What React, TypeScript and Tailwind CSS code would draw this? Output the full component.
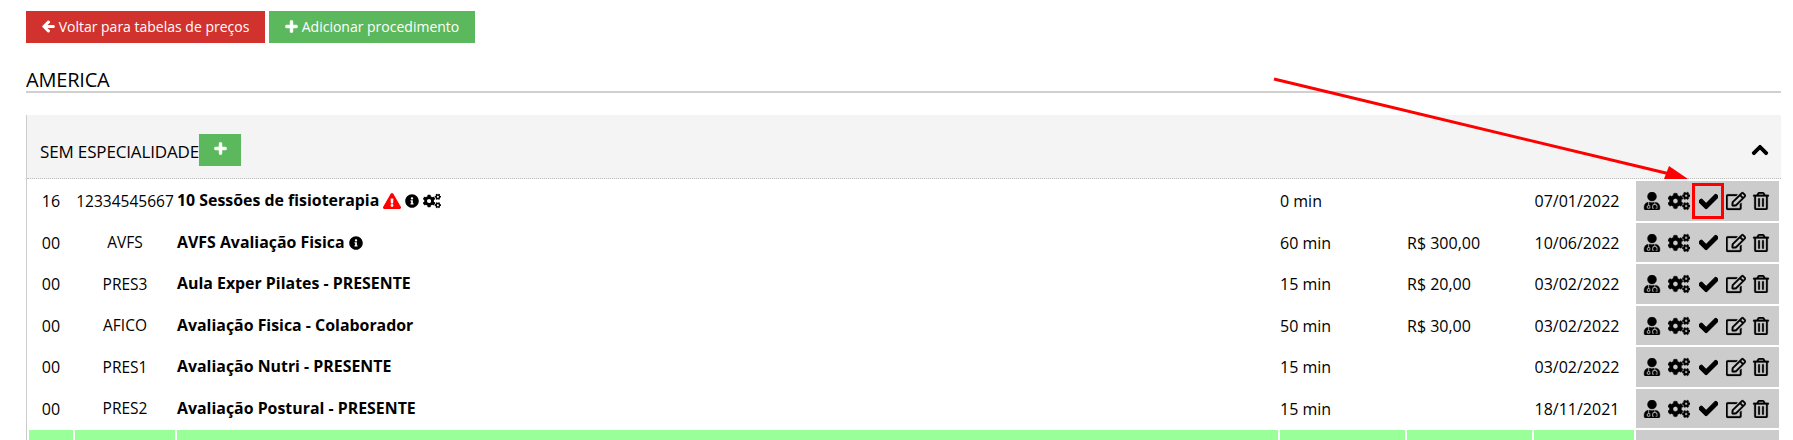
import { FaArrowLeft, FaCheck, FaChevronUp, FaCogs, FaExclamationTriangle, FaInfoCircle, FaPlus, FaRegEdit, FaRegTrashAlt, FaUserMd } from "react-icons/fa";

const rows = [
  { qty: "16", code: "12334545667", name: "10 Sessões de fisioterapia", warn: true, info: true, gears: true, time: "0 min", price: "", date: "07/01/2022" },
  { qty: "00", code: "AVFS", name: "AVFS Avaliação Fisica", info: true, time: "60 min", price: "R$ 300,00", date: "10/06/2022" },
  { qty: "00", code: "PRES3", name: "Aula Exper Pilates - PRESENTE", time: "15 min", price: "R$ 20,00", date: "03/02/2022" },
  { qty: "00", code: "AFICO", name: "Avaliação Fisica - Colaborador", time: "50 min", price: "R$ 30,00", date: "03/02/2022" },
  { qty: "00", code: "PRES1", name: "Avaliação Nutri - PRESENTE", time: "15 min", price: "", date: "03/02/2022" },
  { qty: "00", code: "PRES2", name: "Avaliação Postural - PRESENTE", time: "15 min", price: "", date: "18/11/2021" },
];

function Actions({ marked }: { marked?: boolean }) {
  return (
    <td className="bg-[#cccccc] p-0 pt-[1px]">
      <div className="flex items-center justify-center gap-[7px] pr-[2px] text-[18px] text-black">
        <FaUserMd stroke="currentColor" strokeWidth={12} />
        <FaCogs className="text-[22px]" stroke="currentColor" strokeWidth={12} />
        <span className={marked ? "-mx-[5px] flex h-[36px] w-[32px] items-center justify-center border-[3px] border-[#ff0000]" : "flex w-[22px] items-center justify-center"}>
          <FaCheck className="text-[19px]" stroke="currentColor" strokeWidth={30} />
        </span>
        <FaRegEdit className="text-[20px]" stroke="currentColor" strokeWidth={8} />
        <FaRegTrashAlt className="-ml-[1px]" stroke="currentColor" strokeWidth={8} />
      </div>
    </td>
  );
}

export default function App() {
  return (
    <div className="relative h-[440px] w-full overflow-hidden bg-white text-[16px] text-black" style={{ fontFamily: '"Open Sans", sans-serif' }}>
      <div className="pl-[26px] pr-[12px] pt-[11px]">
        <div className="flex gap-[4px]">
          <button className="flex h-[32px] w-[239px] items-center justify-center gap-[4px] bg-[#d2322d] pb-[1px] text-[14px] text-white">
            <FaArrowLeft className="text-[13px]" stroke="currentColor" strokeWidth={40} />
            Voltar para tabelas de preços
          </button>
          <button className="flex h-[32px] w-[206px] items-center justify-center gap-[4px] bg-[#5cb85c] pb-[1px] text-[14px] text-white">
            <FaPlus className="text-[13px]" stroke="currentColor" strokeWidth={40} />
            Adicionar procedimento
          </button>
        </div>

        <h2 className="mt-[24px] h-[26px] border-b-2 border-[#d0d0d0] text-[20px] leading-[26px] tracking-[-0.2px]">AMERICA</h2>

        <div className="mt-[22px] border-l border-[#cccccc]">
          <div className="flex h-[64px] items-center justify-between border-b border-dotted border-[#bbbbbb] bg-[#f4f4f4] pl-[13px] pr-[12px]">
            <div className="flex items-center pt-[6px]">
              <span className="pt-[4px] text-[17px] tracking-[-0.15px]">SEM ESPECIALIDADE</span>
              <button className="flex h-[32px] w-[42px] items-center justify-center bg-[#5cb85c] pb-[2px] text-[13px] text-white">
                <FaPlus stroke="currentColor" strokeWidth={40} />
              </button>
            </div>
            <FaChevronUp className="mt-[6px] text-[18px]" stroke="currentColor" strokeWidth={30} />
          </div>

          <table className="w-full table-fixed border-separate border-spacing-[2px]">
            <colgroup>
              <col className="w-[44px]" />
              <col className="w-[100px]" />
              <col />
              <col className="w-[125px]" />
              <col className="w-[125px]" />
              <col className="w-[100px]" />
              <col className="w-[143px]" />
            </colgroup>
            <tbody>
              {rows.map((r, i) => (
                <tr key={r.code} className="h-[39.5px]">
                  <td className="p-0 pt-[1px] text-center">{r.qty}</td>
                  <td className="p-0 pt-[1px] text-center text-[15.5px] whitespace-nowrap">{r.code}</td>
                  <td className="p-0 pt-[1px] text-[15.9px] font-bold">
                    <span className="inline-flex items-center gap-[4px]">
                      {r.name}
                      {r.warn && <FaExclamationTriangle className="text-[18px] text-[#ff0000]" />}
                      {r.info && <FaInfoCircle className="text-[14px]" />}
                      {r.gears && <FaCogs className="text-[18px]" />}
                    </span>
                  </td>
                  <td className="p-0 pt-[1px]">{r.time}</td>
                  <td className="p-0 pt-[1px]">{r.price}</td>
                  <td className="p-0 pr-[14px] pt-[1px] text-center">{r.date}</td>
                  <Actions marked={i === 0} />
                </tr>
              ))}
              <tr className="h-[39.5px]">
                <td className="bg-[#99ff99]" />
                <td className="bg-[#99ff99]" />
                <td className="bg-[#99ff99]" />
                <td className="bg-[#99ff99]" />
                <td className="bg-[#99ff99]" />
                <td className="bg-[#99ff99]" />
                <td className="bg-[#cccccc]" />
              </tr>
            </tbody>
          </table>
        </div>
      </div>

      {/* seta vermelha da anotacao */}
      <svg className="absolute left-0 top-0 h-[440px] w-full" viewBox="0 0 1793 440" fill="none">
        <line x1="1274" y1="79" x2="1670" y2="174" stroke="#ff0000" strokeWidth="3" />
        <polygon points="1688,179 1664,179 1669,166" fill="#ff0000" />
      </svg>
    </div>
  );
}
